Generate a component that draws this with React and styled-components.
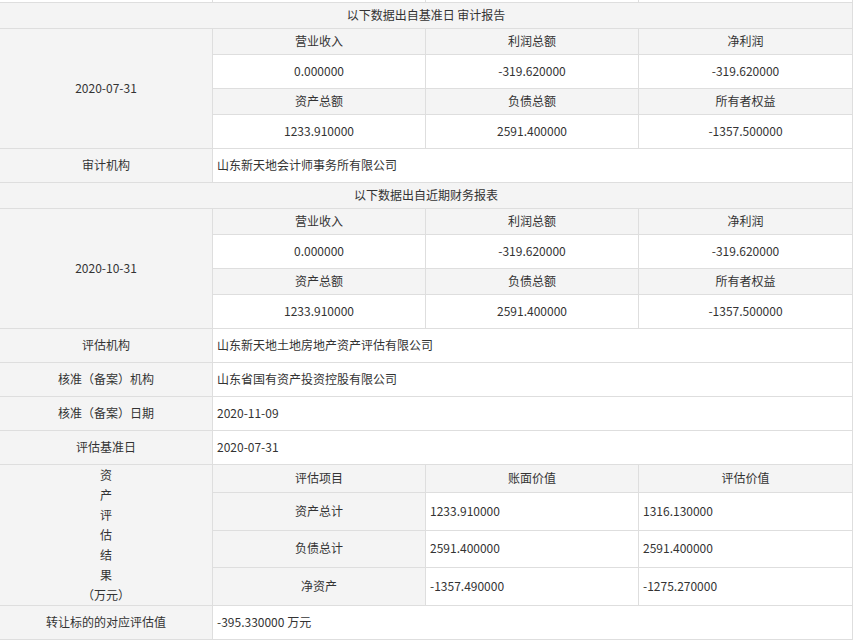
import React from "react"
import styled, { createGlobalStyle } from "styled-components"

const GlobalStyle = createGlobalStyle`
  html, body {
    margin: 0;
    padding: 0;
    background: #fff;
  }
  body {
    font-family: "Microsoft YaHei", "Noto Sans CJK SC", sans-serif;
    font-size: 12px;
    color: #333;
  }
`

// heights of each grid row (lines are the 1px gaps between them)
const rowHeights = [
  2, 25, 25, 33, 25, 33, 33, 25, 25, 33, 25, 33, 33, 33, 33, 33, 27, 37, 36, 37, 33,
]

const Grid = styled.div`
  display: grid;
  grid-template-columns: 212px 212px 212px 213px;
  grid-template-rows: ${rowHeights.map((h) => `${h}px`).join(" ")};
  gap: 1px;
  width: 853px;
  padding: 0 1px 1px 0;
  box-sizing: border-box;
  background: #dedede;
`

const Cell = styled.div`
  display: flex;
  align-items: center;
  justify-content: ${(p) => (p.$left ? "flex-start" : "center")};
  padding: ${(p) => (p.$left ? "0 0 2px 4px" : "0 0 2px 0")};
  background: ${(p) => (p.$grey ? "#f4f4f4" : "#fff")};
  grid-column: span ${(p) => p.$cols || 1};
  grid-row: span ${(p) => p.$rows || 1};
  white-space: nowrap;
  overflow: hidden;
  line-height: 20px;
`

const StackedLabel = styled.div`
  grid-row: span 4;
  background: #f4f4f4;
  display: flex;
  flex-direction: column;
  align-items: center;
  line-height: 20px;
`

const Label = (props) => <Cell $grey {...props} />

function FinanceBlock({ date, heading }) {
  return (
    <>
      <Label $cols={4}>{heading}</Label>
      <Label $rows={4}>{date}</Label>
      <Label>营业收入</Label>
      <Label>利润总额</Label>
      <Label>净利润</Label>
      <Cell>0.000000</Cell>
      <Cell>-319.620000</Cell>
      <Cell>-319.620000</Cell>
      <Label>资产总额</Label>
      <Label>负债总额</Label>
      <Label>所有者权益</Label>
      <Cell>1233.910000</Cell>
      <Cell>2591.400000</Cell>
      <Cell>-1357.500000</Cell>
    </>
  )
}

const assets = [
  ["资产总计", "1233.910000", "1316.130000"],
  ["负债总计", "2591.400000", "2591.400000"],
  ["净资产", "-1357.490000", "-1275.270000"],
]

export default function App() {
  return (
    <>
      <GlobalStyle />
      <Grid>
        <Cell />
        <Cell />
        <Cell />
        <Cell />

        <FinanceBlock date="2020-07-31" heading="以下数据出自基准日 审计报告" />
        <Label>审计机构</Label>
        <Cell $left $cols={3}>山东新天地会计师事务所有限公司</Cell>

        <FinanceBlock date="2020-10-31" heading="以下数据出自近期财务报表" />
        <Label>评估机构</Label>
        <Cell $left $cols={3}>山东新天地土地房地产资产评估有限公司</Cell>
        <Label>核准（备案）机构</Label>
        <Cell $left $cols={3}>山东省国有资产投资控股有限公司</Cell>
        <Label>核准（备案）日期</Label>
        <Cell $left $cols={3}>2020-11-09</Cell>
        <Label>评估基准日</Label>
        <Cell $left $cols={3}>2020-07-31</Cell>

        <StackedLabel>
          <span>资</span>
          <span>产</span>
          <span>评</span>
          <span>估</span>
          <span>结</span>
          <span>果</span>
          <span>（万元）</span>
        </StackedLabel>
        <Label>评估项目</Label>
        <Label>账面价值</Label>
        <Label>评估价值</Label>
        {assets.map(([name, book, value]) => (
          <React.Fragment key={name}>
            <Label>{name}</Label>
            <Cell $left>{book}</Cell>
            <Cell $left>{value}</Cell>
          </React.Fragment>
        ))}

        <Label>转让标的的对应评估值</Label>
        <Cell $left $cols={3}>-395.330000 万元</Cell>
      </Grid>
    </>
  )
}
